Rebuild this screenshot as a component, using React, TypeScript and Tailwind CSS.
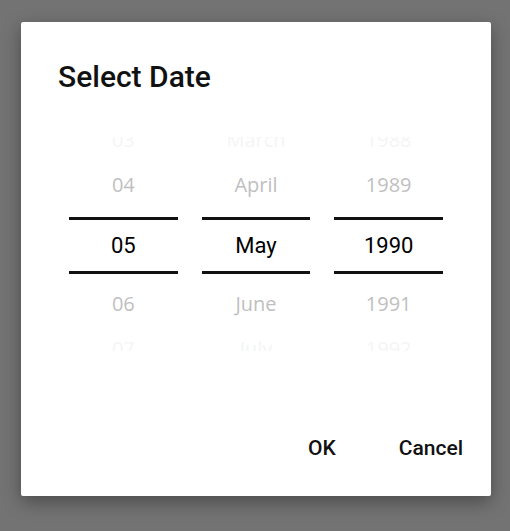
const DAYS = ["03", "04", "05", "06", "07"];
const MONTHS = ["March", "April", "May", "June", "July"];
const YEARS = ["1988", "1989", "1990", "1991", "1992"];

function Wheel({ items }: { items: string[] }) {
  return (
    <div className="flex flex-col">
      {/* edge rows fade out and are half hidden */}
      <div className="h-[15px] flex items-end justify-center overflow-hidden pb-[2px]">
        <span className="text-[20px] leading-[20px] text-[#f5f5f5] font-['Open_Sans',sans-serif]">{items[0]}</span>
      </div>
      <div className="h-[65px] flex items-center justify-center text-[20px] text-[#bfbfbf] font-['Open_Sans',sans-serif]">
        {items[1]}
      </div>
      <div className="h-[57px] flex items-center justify-center border-y-[3px] border-[#111] text-[22px] text-black font-['Roboto',sans-serif]">
        {items[2]}
      </div>
      <div className="h-[59px] flex items-center justify-center text-[20px] text-[#bfbfbf] font-['Open_Sans',sans-serif]">
        {items[3]}
      </div>
      <div className="h-[18px] flex items-start justify-center overflow-hidden pt-[6px]">
        <span className="text-[20px] leading-[20px] text-[#f5f5f5] font-['Open_Sans',sans-serif]">{items[4]}</span>
      </div>
    </div>
  );
}

export default function App() {
  return (
    <div className="w-[510px] h-[531px] bg-[#737373] pt-[22px] pl-[21px] font-['Roboto',sans-serif]">
      <div className="w-[470px] h-[474px] bg-white rounded-[2px] shadow-[0_6px_18px_rgba(0,0,0,0.35)] flex flex-col">
        <h1 className="pt-[37px] pl-[37px] text-[30px] leading-[36px] font-medium text-[#111]">Select Date</h1>

        <div className="mt-[42px] px-[48px] grid grid-cols-3 gap-6">
          <Wheel items={DAYS} />
          <Wheel items={MONTHS} />
          <Wheel items={YEARS} />
        </div>

        <div className="mt-[85px] flex justify-end gap-[63px] pr-[28px]">
          <button className="text-[21px] leading-[24px] font-medium text-[#111]">OK</button>
          <button className="text-[21px] leading-[24px] font-medium text-[#111]">Cancel</button>
        </div>
      </div>
    </div>
  );
}
